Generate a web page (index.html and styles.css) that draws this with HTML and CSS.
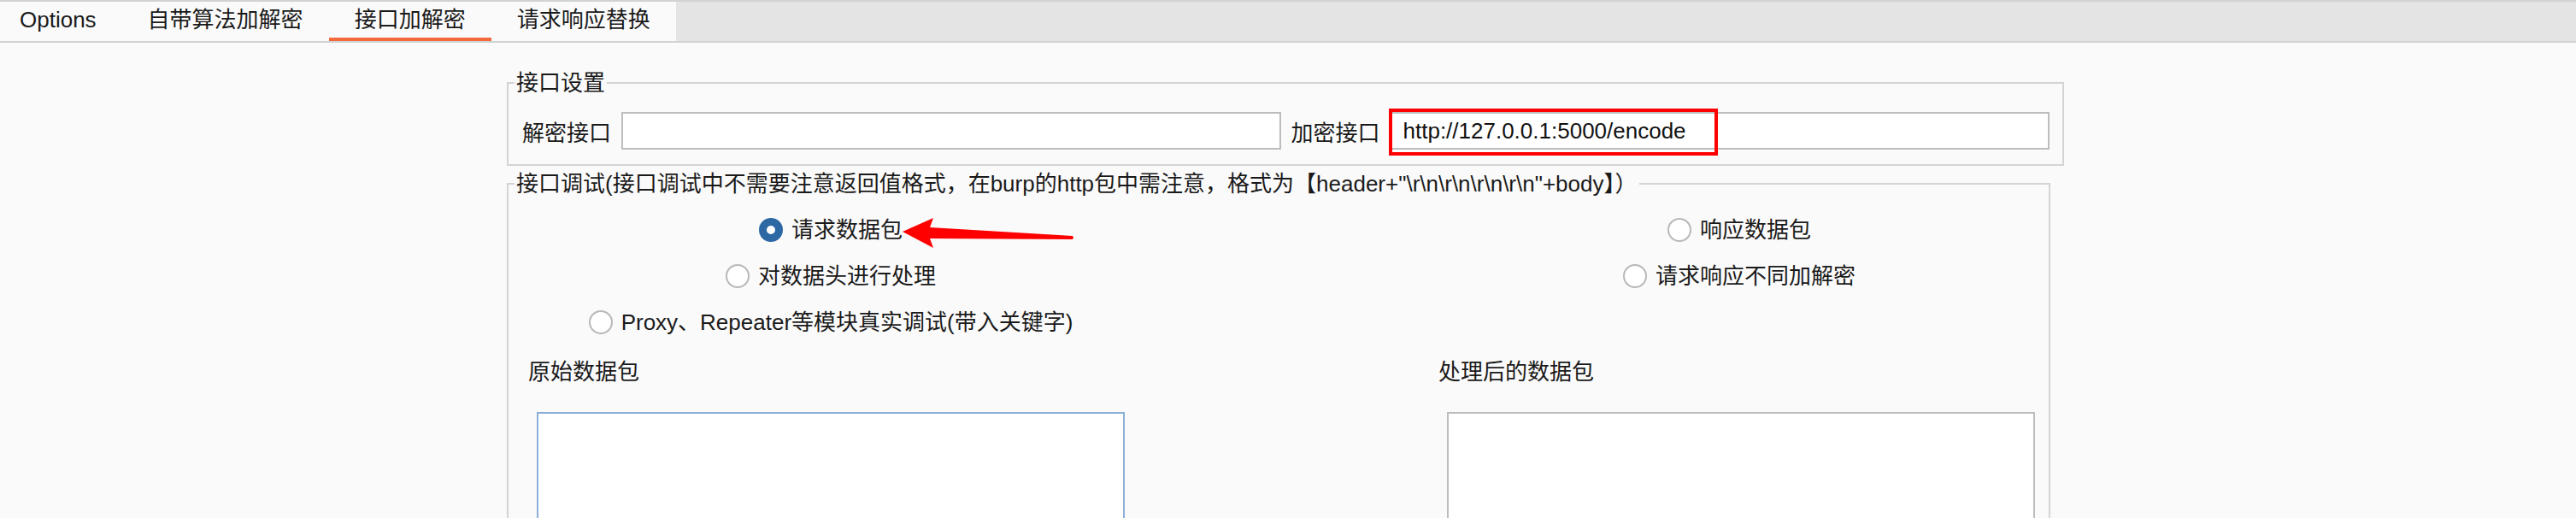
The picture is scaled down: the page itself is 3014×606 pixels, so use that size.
FILE: index.html
```html
<!DOCTYPE html>
<html lang="zh-CN">
<head>
  <meta charset="UTF-8">
  <title>接口加解密</title>
  <link rel="stylesheet" href="styles.css">
</head>
<body>

<div class="tabs">
  <div class="tab-list">
    <div class="tab">Options</div>
    <div class="tab">自带算法加解密</div>
    <div class="tab active">接口加解密</div>
    <div class="tab">请求响应替换</div>
  </div>
</div>

<div class="main">

  <!-- 接口设置 -->
  <fieldset class="group group-api">
    <legend>接口设置</legend>
    <div class="api-row">
      <label class="api-label">解密接口</label>
      <div class="field-wrap"><input class="field" type="text"></div>
      <label class="api-label">加密接口</label>
      <div class="field-wrap">
        <input class="field" type="text" value="http://127.0.0.1:5000/encode">
        <span class="mark"></span>
      </div>
    </div>
  </fieldset>

  <!-- 接口调试 -->
  <fieldset class="group group-debug">
    <legend>接口调试(接口调试中不需要注意返回值格式，在burp的http包中需注意，格式为【header+"\r\n\r\n\r\n\r\n"+body】）</legend>

    <div class="modes">
      <div class="mode-col">
        <div class="radio checked"><span class="dot"></span>请求数据包</div>
        <div class="radio"><span class="dot"></span>对数据头进行处理</div>
        <div class="radio"><span class="dot"></span>Proxy、Repeater等模块真实调试(带入关键字)</div>
      </div>
      <div class="mode-col">
        <div class="radio"><span class="dot"></span>响应数据包</div>
        <div class="radio"><span class="dot"></span>请求响应不同加解密</div>
      </div>
    </div>

    <div class="packets">
      <div class="packet">
        <div class="packet-title">原始数据包</div>
        <textarea class="packet-body focused"></textarea>
      </div>
      <div class="packet">
        <div class="packet-title">处理后的数据包</div>
        <textarea class="packet-body"></textarea>
      </div>
    </div>
  </fieldset>

</div>

<!-- annotation arrow -->
<svg class="arrow" width="3014" height="606" viewBox="0 0 3014 606">
  <polygon points="1056,271 1092,255 1088,266 1255,276 1256,278 1255,280 1088,279 1092,290" fill="#ff0000"/>
</svg>

</body>
</html>
```

FILE: styles.css
```css
html, body {
  margin: 0;
  padding: 0;
  height: 606px;
  overflow: hidden;
}

body {
  font-family: "Liberation Sans", "Noto Sans CJK SC", sans-serif;
  font-size: 26px;
  color: #1a1a1a;
  background: #fafafa;
  position: relative;
}

/* tab bar */
.tabs {
  height: 50px;
  box-sizing: border-box;
  border-top: 2px solid #d0d3d3;
  border-bottom: 2px solid #d0d3d3;
  background: #e4e4e4;
  display: flex;
}

.tab-list {
  display: flex;
  background: #fafafa;
}

.tab {
  padding: 0 30px;
  line-height: 42px;
  border-bottom: 4px solid transparent;
  white-space: nowrap;
}

.tab:first-child {
  padding-left: 23px;
}

.tab.active {
  border-bottom-color: #f4693a;
}

/* main panel */
.main {
  margin: 32px 0 0 593px;
}

.group {
  margin: 0;
  padding: 0;
  min-width: 0;
  border: 2px solid #d4d4d4;
}

.group legend {
  margin-left: 7px;
  padding: 0 2px;
  line-height: 30px;
  white-space: nowrap;
}

.group-api {
  width: 1822px;
  box-sizing: border-box;
}

.group-debug {
  width: 1806px;
  box-sizing: border-box;
  margin-top: 6px;
  height: 500px;
}

.api-row {
  display: flex;
  align-items: center;
  gap: 12px;
  padding: 19px 15px 17px 16px;
}

.api-label {
  white-space: nowrap;
}

.field-wrap {
  flex: 1;
  position: relative;
  display: flex;
}

.field {
  flex: 1;
  width: 100%;
  height: 44px;
  box-sizing: border-box;
  border: 2px solid #bfbcbc;
  background: #fff;
  padding: 0 13px;
  font: inherit;
  color: #111;
  outline: none;
}

.mark {
  position: absolute;
  left: -2px;
  top: -4px;
  width: 385px;
  height: 55px;
  box-sizing: border-box;
  border: 4px solid #ff0000;
}

/* radio options */
.modes {
  display: grid;
  grid-template-columns: 754px 724px;
  justify-content: space-between;
  padding-top: 24px;
}

.mode-col {
  display: flex;
  flex-direction: column;
  align-items: center;
  gap: 24px;
}

.radio {
  display: flex;
  align-items: center;
  gap: 10px;
  line-height: 30px;
  white-space: nowrap;
}

.dot {
  width: 28px;
  height: 28px;
  box-sizing: border-box;
  border-radius: 50%;
  border: 2px solid #b8b8b8;
  background: #fff;
}

.radio.checked .dot {
  border: 9px solid #2b68a4;
}

/* packet boxes */
.packets {
  display: grid;
  grid-template-columns: 1065px 1fr;
  margin-top: 28px;
}

.packet {
  padding-left: 23px;
}

.packet-title {
  line-height: 30px;
  margin-bottom: 32px;
}

.packet-body {
  display: block;
  width: 688px;
  height: 220px;
  margin-left: 10px;
  box-sizing: border-box;
  border: 2px solid #c0bcbc;
  background: #fff;
  resize: none;
  outline: none;
}

.packet-body.focused {
  border-color: #8aafd9;
}

.arrow {
  position: absolute;
  left: 0;
  top: 0;
  pointer-events: none;
}
```
